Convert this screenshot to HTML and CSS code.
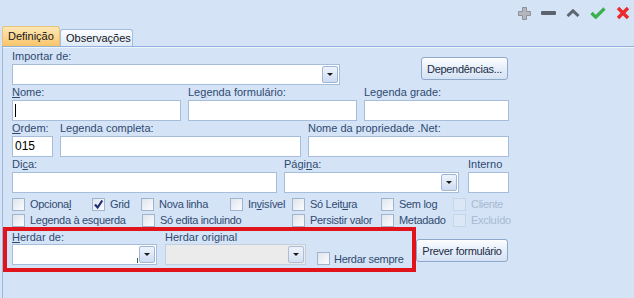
FILE: index.html
```html
<!DOCTYPE html>
<html>
<head>
<meta charset="utf-8">
<link rel="stylesheet" href="styles.css">
</head>
<body>
<div class="toolbar">
  <svg class="ico" width="13" height="13" viewBox="0 0 13 13"><path d="M4.5 .5h4v4h4v4h-4v4h-4v-4h-4v-4h4z" fill="#b3b6ba" stroke="#8e9298"/></svg>
  <svg class="ico" width="15" height="4" viewBox="0 0 15 4"><rect width="15" height="4" rx="1" fill="#5d636c"/></svg>
  <svg class="ico" width="14" height="8" viewBox="0 0 14 8"><path d="M1.5 7L7 1.8 12.5 7" fill="none" stroke="#5f6872" stroke-width="3"/></svg>
  <svg class="ico" width="16" height="12" viewBox="0 0 16 12"><path d="M1.5 6l4.2 4.2L14.5 1.5" fill="none" stroke="#3bb14d" stroke-width="3.2"/></svg>
  <svg class="ico" width="14" height="14" viewBox="0 0 14 14"><path d="M2 2l10 10M12 2L2 12" stroke="#ec2a2e" stroke-width="3.4"/></svg>
</div>

<div class="tabs">
  <div class="tab active">Definição</div>
  <div class="tab">Observações</div>
</div>

<div class="panel">
  <div class="row">
    <div class="field w-import"><label>Importar de:</label><div class="box combo"><span class="drop"></span></div></div>
    <button class="btn btn-dep">Dependências...</button>
  </div>
  <div class="row">
    <div class="field w-nome"><label><u>N</u>ome:</label><div class="box"><span class="caret"></span></div></div>
    <div class="field w-nome"><label>Le<u>g</u>enda formulário:</label><div class="box"></div></div>
    <div class="field w-grade"><label>Legenda <u>g</u>rade:</label><div class="box"></div></div>
  </div>
  <div class="row">
    <div class="field w-ordem"><label><u>O</u>rdem:</label><div class="box value">015</div></div>
    <div class="field w-completa"><label>Legenda completa:</label><div class="box"></div></div>
    <div class="field w-prop"><label>Nome da propriedade .Net:</label><div class="box"></div></div>
  </div>
  <div class="row">
    <div class="field w-dica"><label>Di<u>c</u>a:</label><div class="box"></div></div>
    <div class="field w-pagina"><label>Pági<u>n</u>a:</label><div class="box combo"><span class="drop"></span></div></div>
    <div class="field w-interno"><label>Interno</label><div class="box"></div></div>
  </div>

  <div class="checks">
    <div class="check-row">
      <span class="check c1"><i class="cb"></i><span>Opciona<u>l</u></span></span>
      <span class="check c2"><i class="cb on"><svg width="11" height="11" viewBox="0 0 11 11"><path d="M2 5.5l2.6 3L9.3 1.5" fill="none" stroke="#1d2f78" stroke-width="2.2"/></svg></i><span>Grid</span></span>
      <span class="check c3"><i class="cb"></i><span>Nova linha</span></span>
      <span class="check c4"><i class="cb"></i><span>In<u>v</u>isível</span></span>
      <span class="check c5"><i class="cb"></i><span>Só Leit<u>u</u>ra</span></span>
      <span class="check c6"><i class="cb"></i><span>Sem log</span></span>
      <span class="check off"><i class="cb"></i><span>Cliente</span></span>
    </div>
    <div class="check-row">
      <span class="check d1"><i class="cb"></i><span>Legenda à esquerda</span></span>
      <span class="check d2"><i class="cb"></i><span>Só edita incluindo</span></span>
      <span class="check c5"><i class="cb"></i><span>Persistir valor</span></span>
      <span class="check c6"><i class="cb"></i><span>Metadado</span></span>
      <span class="check off"><i class="cb"></i><span>Excluído</span></span>
    </div>
  </div>

  <div class="bottom">
    <div class="mark">
      <div class="field w-herdar"><label><u>H</u>erdar de:</label><div class="box combo"><span class="tick"></span><span class="drop"></span></div></div>
      <div class="field w-original"><label>Herdar original</label><div class="box combo disabled"><span class="drop"></span></div></div>
      <span class="check sempre"><i class="cb"></i><span>Herdar sempre</span></span>
    </div>
    <button class="btn btn-prever">Prever formulário</button>
  </div>
</div>
</body>
</html>
```

FILE: styles.css
```css
body {
  margin: 0;
  width: 634px;
  height: 298px;
  overflow: hidden;
  background: #d5e3f7;
  font-family: "Liberation Sans", Arial, sans-serif;
  font-size: 11px;
  color: #2e4a70;
}

.toolbar {
  height: 26px;
  display: flex;
  justify-content: flex-end;
  align-items: center;
  gap: 10px;
  padding-right: 4px;
}

.tabs {
  height: 20px;
  display: flex;
  align-items: flex-end;
  padding-left: 2px;
}
.tab {
  box-sizing: border-box;
  height: 17px;
  width: 73px;
  padding-left: 5px;
  border: 1px solid #a3bddf;
  border-bottom: none;
  border-radius: 3px 3px 0 0;
  background: linear-gradient(#fbfdff, #dfeaf8);
  color: #15171a;
  line-height: 16px;
}
.tab.active {
  height: 20px;
  width: 58px;
  padding-left: 5px;
  border-color: #e8c27a;
  background: linear-gradient(#fde7b4, #fbd58e 55%, #f8c468);
  line-height: 18px;
}

.panel {
  margin-left: 2px;
  height: 251px;
  padding: 2px 0 0 9px;
  border-top: 1px solid #8fb0da;
  border-left: 1px solid #9ab8de;
  box-shadow: inset 0 1px #eef5fd;
}

.row {
  display: flex;
  gap: 7px;
}
.field label {
  display: block;
  height: 15px;
  line-height: 15px;
  white-space: nowrap;
}
.box {
  box-sizing: border-box;
  height: 21px;
  border: 1px solid #a6bddc;
  background: #fff;
}
.value {
  padding-left: 2px;
  line-height: 19px;
  color: #000;
  font-size: 12px;
}
.caret {
  display: block;
  width: 1px;
  height: 13px;
  margin: 3px 0 0 2px;
  background: #000;
}
.combo {
  display: flex;
  justify-content: flex-end;
  align-items: center;
  padding-right: 1px;
}
.drop {
  box-sizing: border-box;
  width: 16px;
  height: 17px;
  border: 1px solid #9fb6d6;
  border-radius: 2px;
  background: linear-gradient(#eef4fc, #cddcf2);
  display: flex;
  justify-content: center;
  align-items: center;
}
.drop::after {
  content: "";
  border-left: 3px solid transparent;
  border-right: 3px solid transparent;
  border-top: 3px solid #1b1b1b;
}
.tick {
  width: 1px;
  height: 5px;
  margin: 12px 1px 0 0;
  background: #2e6b33;
}
.disabled {
  background: #ebebeb;
  border-color: #c3cfdf;
}
.disabled .drop {
  border-color: #aebed4;
  background: linear-gradient(#eef3fa, #d6e1f0);
}

.w-import { width: 328px; }
.w-nome { width: 169px; }
.w-grade { width: 145px; }
.w-ordem { width: 41px; }
.w-completa { width: 241px; }
.w-prop { width: 201px; }
.w-dica { width: 265px; }
.w-pagina { width: 175px; margin-right: 2px; }
.w-interno { width: 41px; }
.w-herdar { width: 145px; }
.w-original { width: 141px; }

.btn {
  box-sizing: border-box;
  height: 23px;
  padding: 0;
  border: 1px solid #8ea8c9;
  border-radius: 3px;
  background: linear-gradient(#fdfeff, #e6eef9 50%, #d5e2f4);
  font-family: "Liberation Sans", Arial, sans-serif;
  font-size: 11px;
  letter-spacing: -0.3px;
  white-space: nowrap;
  color: #1b2c45;
}
.btn-dep {
  width: 87px;
  margin: 8px 0 0 74px;
}
.btn-prever {
  width: 92px;
  margin-top: 12px;
}

.checks {
  margin-top: 3px;
}
.check-row {
  display: flex;
  height: 16px;
}
.check {
  display: flex;
  align-items: center;
  gap: 5px;
  white-space: nowrap;
  font-size: 11px;
  letter-spacing: -0.3px;
  color: #2f4b70;
}
.cb {
  box-sizing: border-box;
  flex: none;
  width: 13px;
  height: 13px;
  border: 1px solid #a2b4cc;
  background: linear-gradient(135deg, #dfe5ee, #fbfcfe);
  display: flex;
  justify-content: center;
  align-items: center;
}
.check.off {
  color: #a8b9d0;
}
.check.off .cb {
  border-color: #c7d5e8;
  background: #dce7f6;
}
.c1 { width: 80px; }
.c2 { width: 49px; }
.c3 { width: 89px; }
.c4 { width: 62px; }
.c5 { width: 89px; }
.c6 { width: 72px; }
.d1 { width: 130px; }
.d2 { width: 150px; }

.bottom {
  display: flex;
  align-items: flex-start;
  margin: -1px 0 0 -9px;
}
.mark {
  box-sizing: border-box;
  width: 413px;
  height: 45px;
  display: flex;
  gap: 8px;
  padding-left: 5px;
  border: 4px solid #e2141b;
}
.field.w-herdar label,
.field.w-original label {
  height: 13px;
  line-height: 13px;
}
.sempre {
  margin: 18px 0 0 3px;
  gap: 4px;
}
```
